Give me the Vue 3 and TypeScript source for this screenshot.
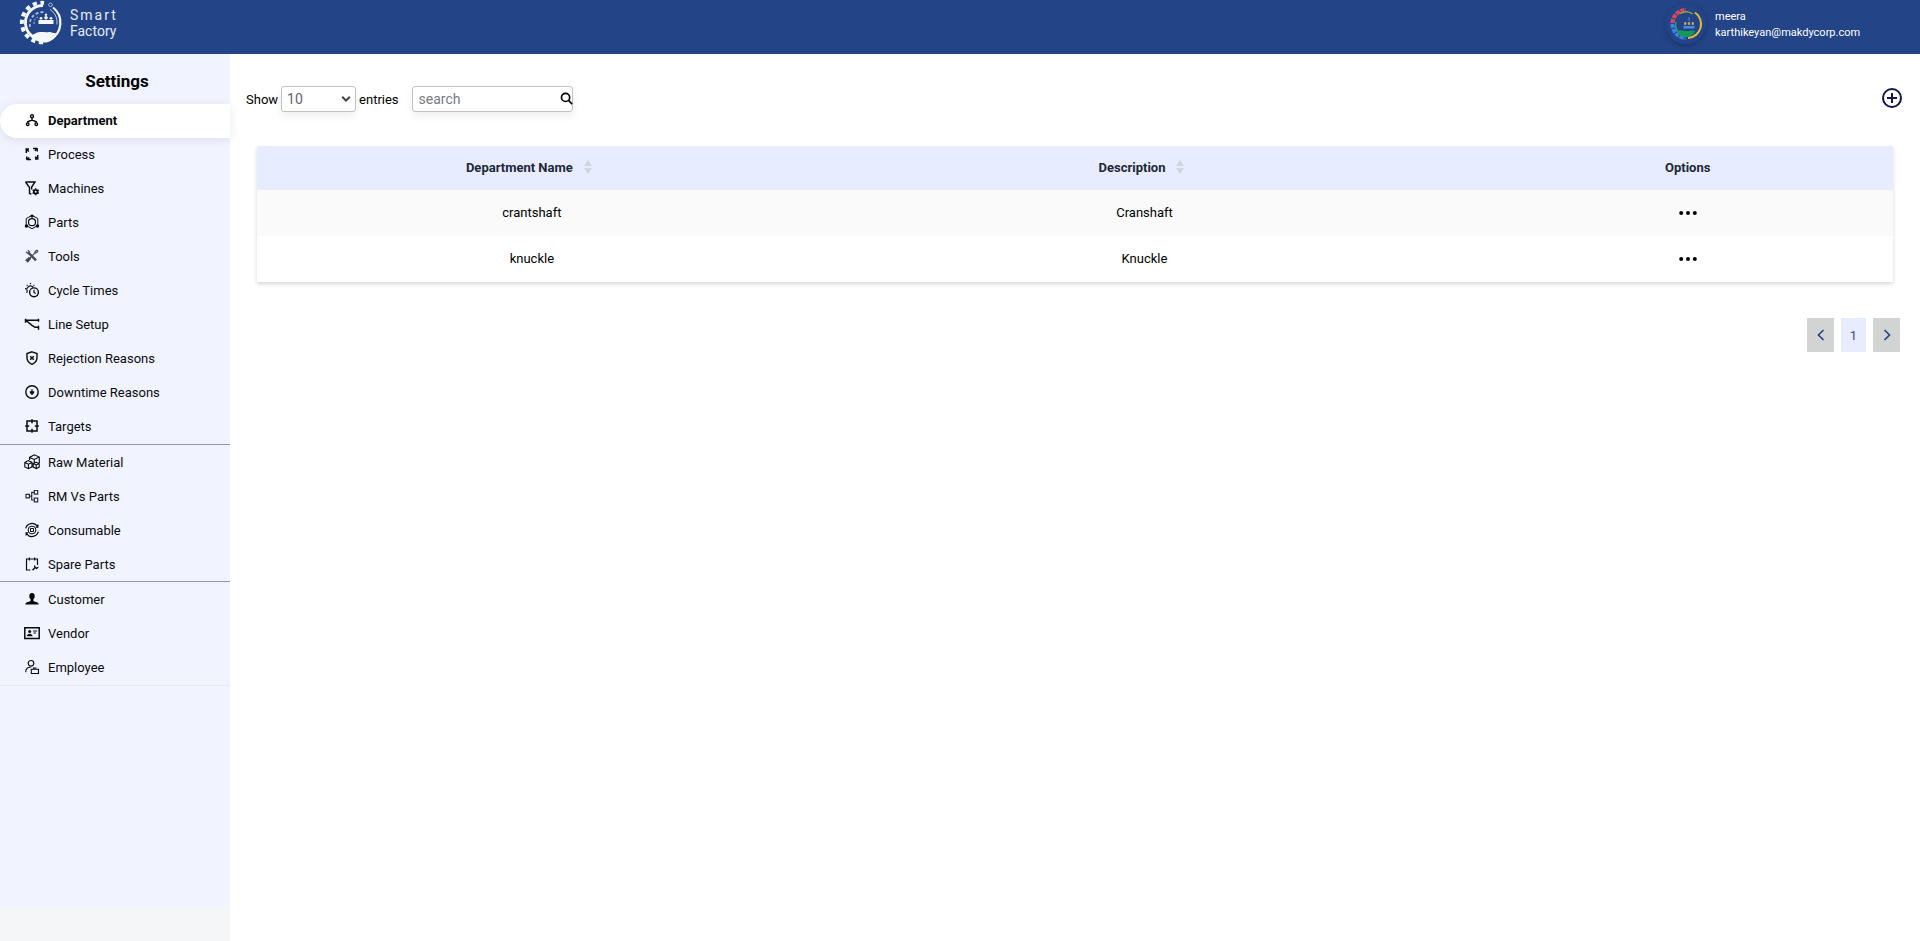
<script setup lang="ts">
import { ref } from 'vue'

interface MenuItem {
  label: string
  icon: string
}

interface Department {
  name: string
  description: string
}

const groups: MenuItem[][] = [
  [
    { label: 'Department', icon: 'department' },
    { label: 'Process', icon: 'process' },
    { label: 'Machines', icon: 'machines' },
    { label: 'Parts', icon: 'parts' },
    { label: 'Tools', icon: 'tools' },
    { label: 'Cycle Times', icon: 'cycle' },
    { label: 'Line Setup', icon: 'line' },
    { label: 'Rejection Reasons', icon: 'rejection' },
    { label: 'Downtime Reasons', icon: 'downtime' },
    { label: 'Targets', icon: 'targets' },
  ],
  [
    { label: 'Raw Material', icon: 'raw' },
    { label: 'RM Vs Parts', icon: 'rm' },
    { label: 'Consumable', icon: 'consumable' },
    { label: 'Spare Parts', icon: 'spare' },
  ],
  [
    { label: 'Customer', icon: 'customer' },
    { label: 'Vendor', icon: 'vendor' },
    { label: 'Employee', icon: 'employee' },
  ],
]

// Inner markup of each 16x16 stroked icon
const icons: Record<string, string> = {
  department:
    '<circle cx="8" cy="4.3" r="1.5"/><circle cx="3.7" cy="12.2" r="1.3"/><circle cx="12.3" cy="12.2" r="1.3"/><path d="M8 5.8v2.4M3.7 11V9.8L8 8l4.3 1.8V11"/>',
  process:
    '<path d="M2.3 7V3.5L5 5.5M1.5 3h3.5M9 2.6h4.5M13.2 2.5v3M10.8 4.8l2.2-2M13.7 9v3.5L11 10.8M14.3 13H11M7 13.6H2.5M2.7 13.5v-3M5.2 11.5l-2.2 2" stroke-width="1.5"/>',
  machines:
    '<path d="M1.5 2h9.500L7.600 7v2.500M1.500 2l4 5.500v6l2 .7"/><circle cx="11.700" cy="11.700" r="1.900" stroke-width="1.800"/><path d="M11.700 8.200v1M11.700 14.200v1M8.600 9.900l.9.600M13.900 12.900l.9.600M8.600 13.500l.9-.6M13.900 10.500l.9-.6"/>',
  parts:
    '<path d="M8 1.300 13.800 4.600v6.800L8 14.700 2.200 11.400V4.600z" stroke-width="1"/><circle cx="8" cy="8.200" r="3.500" stroke-width="1.200"/><circle cx="8" cy="2" r=".9" fill="currentColor"/><circle cx="2.500" cy="12" r="1" fill="currentColor"/><circle cx="13.500" cy="12" r="1" fill="currentColor"/>',
  tools:
    '<g stroke="#454a57"><path d="M4.500 4.800 12 12.300" stroke-width="2.400"/><path d="M2 3.800 3.800 5.400 5.500 3.800 3.800 2.200M3 13l7.800-7.800M10.600 5.200l2.200-.7 1-1.600-.8-.7-1.600 1zM2 12.200l3-2.700 1.400 1.200L3.800 13.800z" stroke-width="1.200"/></g>',
  cycle:
    '<circle cx="10" cy="10.300" r="4.400"/><path d="M10 7.800v2.700l1.600 1M3.600 9.700a3.400 3.400 0 1 1 5.800-4.300M6.500 1v1.200M2.600 2.800l.9.900M1 6.600h1.200M10.400 2.800l-.9.900M2.400 10.600l.8-.8" stroke-width="1.200"/>',
  line:
    '<path d="M1.500 2.800v4M1.500 4.200h13M14.500 2.800v3M2 4.500l6 4.800 3 2h3.500M14.500 9.800v4" stroke-width="1.500"/>',
  rejection:
    '<path d="M8 1.800 13 3.500v4.300c0 3-2.200 5.300-5 6.500-2.800-1.200-5-3.500-5-6.500V3.500z"/><path d="M6.200 6.200l3.600 3.600M9.800 6.200 6.200 9.800" stroke-width="1.400"/>',
  downtime:
    '<circle cx="8" cy="8" r="6.200"/><path d="M8 5.300v5M6.200 8.300 8 10.300l1.800-2M5.800 7.800h4.400" stroke-width="1.200"/>',
  targets:
    '<path d="M3 3h10v10H3zM8 1.200v4M8 10.800v4M1.200 8h4M10.800 8h4" stroke-width="1.500"/>',
  raw:
    '<path d="M.8 8.400l3.600-1.800 3.600 1.800v4.400l-3.600 1.900L.8 13zM.8 8.400l3.600 1.800L8 8.400M4.400 10.200v4.400M9.200 9.600l3-1.300 3 1.300v3.500l-3 1.600-3-1.600zM9.200 9.600l3 1.300 3-1.300M12.200 10.900v3.700M5.500 6V3.400L10.300.8l5 2.200v6M5.500 3.400l4.800 2L15.300 3M10.300 5.400v3" stroke-width="1.100"/>',
  rm:
    '<path d="M2 6.300h3.400v3.600H2zM10.300 2.500h3.400v3.600h-3.400zM10.300 10.200h3.400v3.600h-3.400zM5.400 8.100h2.200M10.300 4.300H7.700v7.700h2.600" stroke-width="1.200" stroke="#2c303c"/>',
  consumable:
    '<path d="M1.700 6.400A6.500 6.500 0 0 1 13.300 4.200M13.900 2.500v2.600h-2M14.300 9.600A6.500 6.500 0 0 1 2.700 11.800M2.100 13.500v-2.600h2" stroke-width="1.200"/><circle cx="8" cy="8" r="3.900" stroke-width="1"/><path d="M6.500 6.500h3v3h-3z" stroke-width="1"/>',
  spare:
    '<path d="M6.500 14H2.500V3h11v5M5.300 1.500v3M10.700 1.500v3M13.500 8v1" stroke-width="1.200"/><path d="M8.500 14.300l2.700-2.800M10.800 9.500c-.6 1.700.6 2.800 2.400 2.300l-1 1.200" stroke-width="1.400"/>',
  customer:
    '<path d="M8 2c1.900 0 2.800 1.400 2.700 3.200-.1 1.500-.7 2.500-1.300 3.200-.2 1 .1 1.700 1 2.100 2.700.8 4.100 1 4.300 3H1.300c.2-2 1.600-2.200 4.300-3 .9-.4 1.200-1.100 1-2.100-.6-.7-1.200-1.700-1.300-3.200C5.200 3.400 6.100 2 8 2z" fill="currentColor" stroke="none"/>',
  vendor:
    '<path d="M.8 2.800h14.400v10.600H.8z" stroke-width="1.500"/><circle cx="5.700" cy="6.600" r="1.500" fill="currentColor" stroke="none"/><path d="M2.800 11.300c0-3.500 5.800-3.500 5.800 0z" fill="currentColor" stroke="none"/><path d="M9 6h4.200M9.500 8h2.500" stroke-width="1.200"/>',
  employee:
    '<circle cx="7" cy="4.300" r="2.800" stroke-width="1.200"/><path d="M1.700 13.200c0-3 2-4.900 5-4.900M7.300 10.300h7.200v4.200H7.300zM9.600 10.300V9h2.800" stroke-width="1.100"/>',
}

const active = ref('Department')
const pageSize = ref(10)
const query = ref('')

const departments: Department[] = [
  { name: 'crantshaft', description: 'Cranshaft' },
  { name: 'knuckle', description: 'Knuckle' },
]
</script>

<template>
  <div class="page">
    <header class="topbar">
      <a class="brand" href="#">
        <svg class="brand-logo" viewBox="0 0 46 46" aria-hidden="true">
          <g fill="none" stroke="#f4f7fc">
            <path d="M24 42.200A19.700 19.700 0 1 1 25 3" stroke-width="4" stroke-dasharray="4.200 3.500" />
            <path d="M26 39.500A17 17 0 1 1 24 5.700" stroke-width="2.800" />
            <path d="M34 7.500A19 19 0 0 1 31 39.500" stroke-width="2.200" />
            <path d="M31 9.500a16 16 0 0 1 7 15" stroke="#b9c8e6" stroke-width="1" />
            <path d="M11 27c-1.500-9 5-15 14-15" stroke="#a9bbdf" stroke-width="1.800" stroke-dasharray="3 2" />
            <path d="M15 24c0-4 1-6 4-7" stroke="#a9bbdf" stroke-dasharray="2 1.500" />
            <circle cx="31.500" cy="4.800" r="1.800" stroke="#a9bbdf" />
          </g>
          <g fill="#f4f7fc">
            <path d="M17 33c5-2 9 0 13-1 3-.5 4 2 9 1-4 7-9 10-15 9.500-6-.5-11-4-13-8 2 1 4 0 6-1.500z" />
            <path d="M19.500 20h15v4h-15z" />
            <circle cx="22" cy="18.300" r="1.400" />
            <circle cx="27" cy="17.800" r="1.800" />
            <circle cx="32" cy="18.300" r="1.400" />
            <circle cx="27" cy="14.800" r="1.200" />
          </g>
        </svg>
        <span class="brand-text"><span class="spaced">Smart</span><span>Factory</span></span>
      </a>
      <div class="user">
        <svg class="avatar" viewBox="0 0 40 40" aria-hidden="true">
          <g fill="none">
            <path d="M6.500 19A13.500 13.500 0 0 1 20 6" stroke="#e0445a" stroke-width="4" stroke-dasharray="4 1" />
            <path d="M6.500 20A14 14 0 0 0 19.500 34" stroke="#3c80e0" stroke-width="4" stroke-dasharray="4 1" />
            <path d="M14 9.500a12 12 0 0 1 13 .5" stroke="#8aa63c" stroke-width="1.500" />
            <path d="M10 18A12 12 0 0 0 12 28" stroke="#2f9a93" stroke-width="1.500" />
            <path d="M29 8.500A14 14 0 0 1 22 34" stroke="#e5b83a" stroke-width="2" />
          </g>
          <path d="M11 27c5-2 8 1 12 0 3-1 5 0 6.500 0-3 5-7 6.500-11 6-4-.5-6-3-7.500-6z" fill="#139a54" />
          <path d="M17.500 22h11v2.500h-11z" fill="#4a8be0" />
          <path d="M18.500 20.500v-2h1.500v2zM22.200 20.500v-2h1.500v2zM26 20.500v-2h1.500v2z" fill="#d7b64a" stroke="#d7b64a" stroke-width=".6" />
          <path d="M23 17v-4" stroke="#4a8be0" />
        </svg>
        <div class="user-text"><span>meera</span><span>karthikeyan@makdycorp.com</span></div>
      </div>
    </header>

    <div class="body">
      <aside class="sidebar">
        <h1 class="title">Settings</h1>
        <nav>
          <ul v-for="(group, g) in groups" :key="g" class="group">
            <li v-for="item in group" :key="item.label">
              <a
                href="#"
                class="menu-item"
                :class="{ active: active === item.label }"
                @click.prevent="active = item.label"
              >
                <svg class="menu-icon" viewBox="0 0 16 16" aria-hidden="true" v-html="icons[item.icon]"></svg>
                <span>{{ item.label }}</span>
              </a>
            </li>
          </ul>
        </nav>
      </aside>

      <main class="content">
        <div class="toolbar">
          <label for="page-size">Show</label>
          <span class="select-wrap">
            <select id="page-size" v-model="pageSize" class="field">
              <option :value="10">10</option>
              <option :value="25">25</option>
              <option :value="50">50</option>
            </select>
            <svg class="chevron" viewBox="0 0 10 8" aria-hidden="true"><path d="M1.200 1.800 5 5.600 8.800 1.800" /></svg>
          </span>
          <label for="page-size">entries</label>
          <span class="search">
            <input v-model="query" class="field" type="text" placeholder="search" aria-label="search" />
            <svg class="lens" viewBox="0 0 14 14" aria-hidden="true"><circle cx="6" cy="5.800" r="4.400" /><path d="M9.200 9l3.800 4" /></svg>
          </span>
          <button class="add" type="button" aria-label="Add department">
            <svg viewBox="0 0 20 20" aria-hidden="true"><circle cx="10" cy="10" r="9" /><path d="M10 5v10M5 10h10" /></svg>
          </button>
        </div>

        <table class="grid">
          <colgroup><col class="c1" /><col class="c2" /><col class="c3" /></colgroup>
          <thead>
            <tr>
              <th v-for="head in ['Department Name', 'Description']" :key="head" scope="col">
                <span class="sortable">
                  {{ head }}
                  <svg class="sort" viewBox="0 0 8 14" aria-hidden="true"><path d="M4 0l4 6H0zM4 14l4-6H0z" /></svg>
                </span>
              </th>
              <th scope="col">Options</th>
            </tr>
          </thead>
          <tbody>
            <tr v-for="row in departments" :key="row.name">
              <td>{{ row.name }}</td>
              <td>{{ row.description }}</td>
              <td>
                <button class="dots" type="button" :aria-label="'Options for ' + row.name">
                  <svg viewBox="0 0 18 4" aria-hidden="true"><circle cx="2.200" cy="2" r="2" /><circle cx="9" cy="2" r="2" /><circle cx="15.800" cy="2" r="2" /></svg>
                </button>
              </td>
            </tr>
          </tbody>
        </table>

        <nav class="pager" aria-label="Pages">
          <button type="button" aria-label="Previous page"><svg viewBox="0 0 8 12" aria-hidden="true"><path d="M6.500 1 1.500 6l5 5" /></svg></button>
          <button type="button" class="current" aria-current="page">1</button>
          <button type="button" aria-label="Next page"><svg viewBox="0 0 8 12" aria-hidden="true"><path d="M1.500 1l5 5-5 5" /></svg></button>
        </nav>
      </main>
    </div>
  </div>
</template>

<style>
body {
  margin: 0;
  background: #fff;
}
</style>

<style scoped>
.page {
  display: flex;
  flex-direction: column;
  min-height: 100vh;
  font-family: Roboto, sans-serif;
  font-size: 13px;
  color: #000;
}
.topbar {
  display: flex;
  justify-content: space-between;
  height: 54px;
  background: #234486;
  color: #fff;
}
.brand {
  display: flex;
  gap: 5px;
  padding-left: 19px;
  color: #e4eaf5;
  text-decoration: none;
}
.brand-logo {
  width: 46px;
  height: 46px;
}
.brand-text {
  display: flex;
  flex-direction: column;
  padding-top: 7px;
  font-size: 14px;
  line-height: 16px;
}
.spaced {
  letter-spacing: 2px;
}
.user {
  display: flex;
  gap: 9px;
  padding-top: 4px;
}
.avatar {
  width: 40px;
  height: 40px;
  border-radius: 50%;
  box-shadow: 0 2px 5px rgba(10, 25, 70, 0.35);
}
.user-text {
  display: flex;
  flex-direction: column;
  min-width: 205px;
  padding-top: 5px;
  font-size: 11px;
  line-height: 16px;
}
.body {
  display: flex;
  flex: 1;
}
.sidebar {
  width: 230px;
  flex: none;
  background: linear-gradient(to top, #f5f6f8 28px, #f1f4ff 40px);
}
.title {
  margin: 0;
  padding: 17px 0 13px 4px;
  font-size: 17px;
  line-height: 20px;
  font-weight: 700;
  text-align: center;
}
.group {
  margin: 0;
  padding: 0;
  list-style: none;
  border-bottom: 1px solid #9096ae;
}
.group:last-child {
  padding-bottom: 1px;
  border-bottom-color: #e6e8f2;
}
.menu-item {
  display: flex;
  align-items: center;
  gap: 8px;
  box-sizing: border-box;
  height: 34px;
  padding-left: 24px;
  color: #0a0a0f;
  text-decoration: none;
}
.group:first-child .menu-item {
  padding-bottom: 2px;
}
.menu-item.active {
  border-radius: 17px 0 0 17px;
  background: #fff;
  box-shadow: 0 2px 10px rgba(60, 65, 90, 0.12);
  font-weight: 700;
}
.menu-icon {
  width: 16px;
  height: 16px;
  fill: none;
  stroke: currentColor;
  stroke-width: 1.4;
}
.content {
  flex: 1;
  min-width: 0;
  padding: 32px 18px 0 16px;
}
.toolbar {
  display: flex;
  align-items: center;
  gap: 3px;
}
.select-wrap,
.search {
  position: relative;
  display: flex;
}
.search {
  margin-left: 10px;
}
.field {
  box-sizing: border-box;
  height: 26px;
  padding: 0 6px;
  border: 1px solid #bfc2c6;
  border-radius: 3px;
  background: #fff;
  box-shadow: 0 4px 8px rgba(0, 0, 0, 0.07);
  font-family: inherit;
  font-size: 14px;
  color: #5f656c;
}
select.field {
  width: 75px;
  padding: 0 5px;
  appearance: none;
}
input.field {
  width: 161px;
  padding-right: 20px;
}
.field::placeholder {
  color: #757b82;
}
.chevron,
.lens {
  position: absolute;
  fill: none;
  pointer-events: none;
}
.chevron {
  top: 9px;
  right: 5px;
  width: 10px;
  height: 8px;
  stroke: #3c4046;
  stroke-width: 2;
}
.lens {
  top: 6px;
  right: 0;
  width: 13px;
  height: 13px;
  stroke: #000;
  stroke-width: 1.8;
}
button {
  border: 0;
  background: none;
  font-family: inherit;
  font-size: 13px;
  cursor: pointer;
}
.add {
  display: flex;
  margin-left: auto;
  padding: 0 0 2px;
}
.add svg {
  width: 20px;
  height: 20px;
  fill: none;
  stroke: #12164e;
  stroke-width: 2;
}
.grid {
  width: calc(100% - 20px);
  margin: 34px 9px 0 11px;
  border-collapse: collapse;
  table-layout: fixed;
  box-shadow: 0 2px 4px rgba(0, 0, 0, 0.16);
  text-align: center;
}
.c1 {
  width: 33.6%;
}
.c2 {
  width: 41.3%;
}
.grid th {
  height: 42px;
  padding: 0 0 2px;
  background: #e7edff;
  color: #212838;
  font-weight: 700;
}
.grid td {
  height: 44px;
  padding: 0 0 2px;
}
.grid tbody tr:nth-child(odd) {
  background: #fafafa;
}
.sortable {
  display: inline-flex;
  align-items: center;
  gap: 11px;
  padding-right: 6px;
}
.sort {
  width: 8px;
  height: 14px;
  fill: #d3d6de;
}
.dots {
  padding: 4px;
  vertical-align: middle;
}
.dots svg {
  display: block;
  width: 18px;
  height: 4px;
}
.pager {
  display: flex;
  justify-content: flex-end;
  gap: 7px;
  margin: 36px 2px 0 0;
}
.pager button {
  display: flex;
  align-items: center;
  justify-content: center;
  width: 27px;
  height: 34px;
  padding: 0;
  background: #d2d3d3;
  color: #3b4a74;
}
.pager .current {
  width: 25px;
  background: #e7edff;
}
.pager svg {
  width: 8px;
  height: 12px;
  fill: none;
  stroke: #274784;
  stroke-width: 1.7;
}
</style>
